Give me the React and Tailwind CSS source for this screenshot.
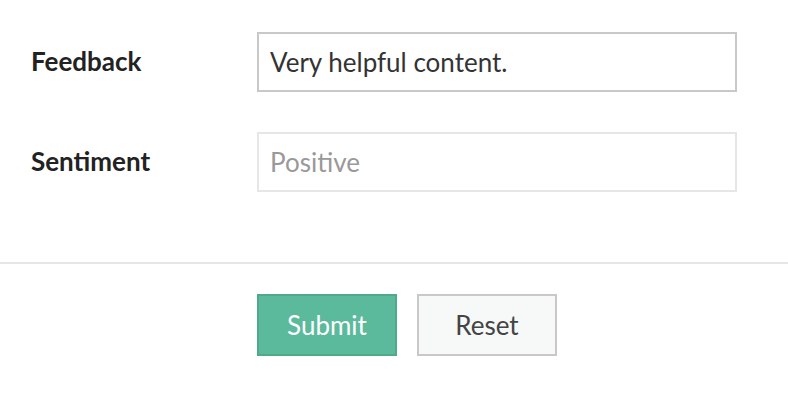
export default function App() {
  return (
    <div className="w-[788px] h-[400px] bg-white font-['Lato',sans-serif] text-[26px]">
      <div className="flex flex-col gap-10 pt-8 pl-[31px]">
        <div className="flex items-center">
          <label className="w-[226px] font-bold text-[#222] -mt-[2px]">Feedback</label>
          <input
            type="text"
            defaultValue="Very helpful content."
            className="w-[480px] h-[60px] border-2 border-[#c8c8c8] px-[11px] text-[#333] outline-none"
          />
        </div>
        <div className="flex items-center">
          <label className="w-[226px] font-bold text-[#222] -mt-[2px]">Sentiment</label>
          <input
            type="text"
            placeholder="Positive"
            className="w-[480px] h-[60px] border-2 border-[#e6e6e6] px-[11px] text-[#333] placeholder:text-[#999] outline-none"
          />
        </div>
      </div>
      <div className="mt-[70px] border-t-2 border-[#e6e6e6]" />
      <div className="flex gap-5 pt-[30px] pl-[257px]">
        <button type="button" className="w-[140px] h-[62px] bg-[#5bba9b] border-2 border-[#4fa98b] text-white">
          Submit
        </button>
        <button type="button" className="w-[140px] h-[62px] bg-[#f7f8f8] border-2 border-[#c8c8c8] text-[#444]">
          Reset
        </button>
      </div>
    </div>
  );
}
